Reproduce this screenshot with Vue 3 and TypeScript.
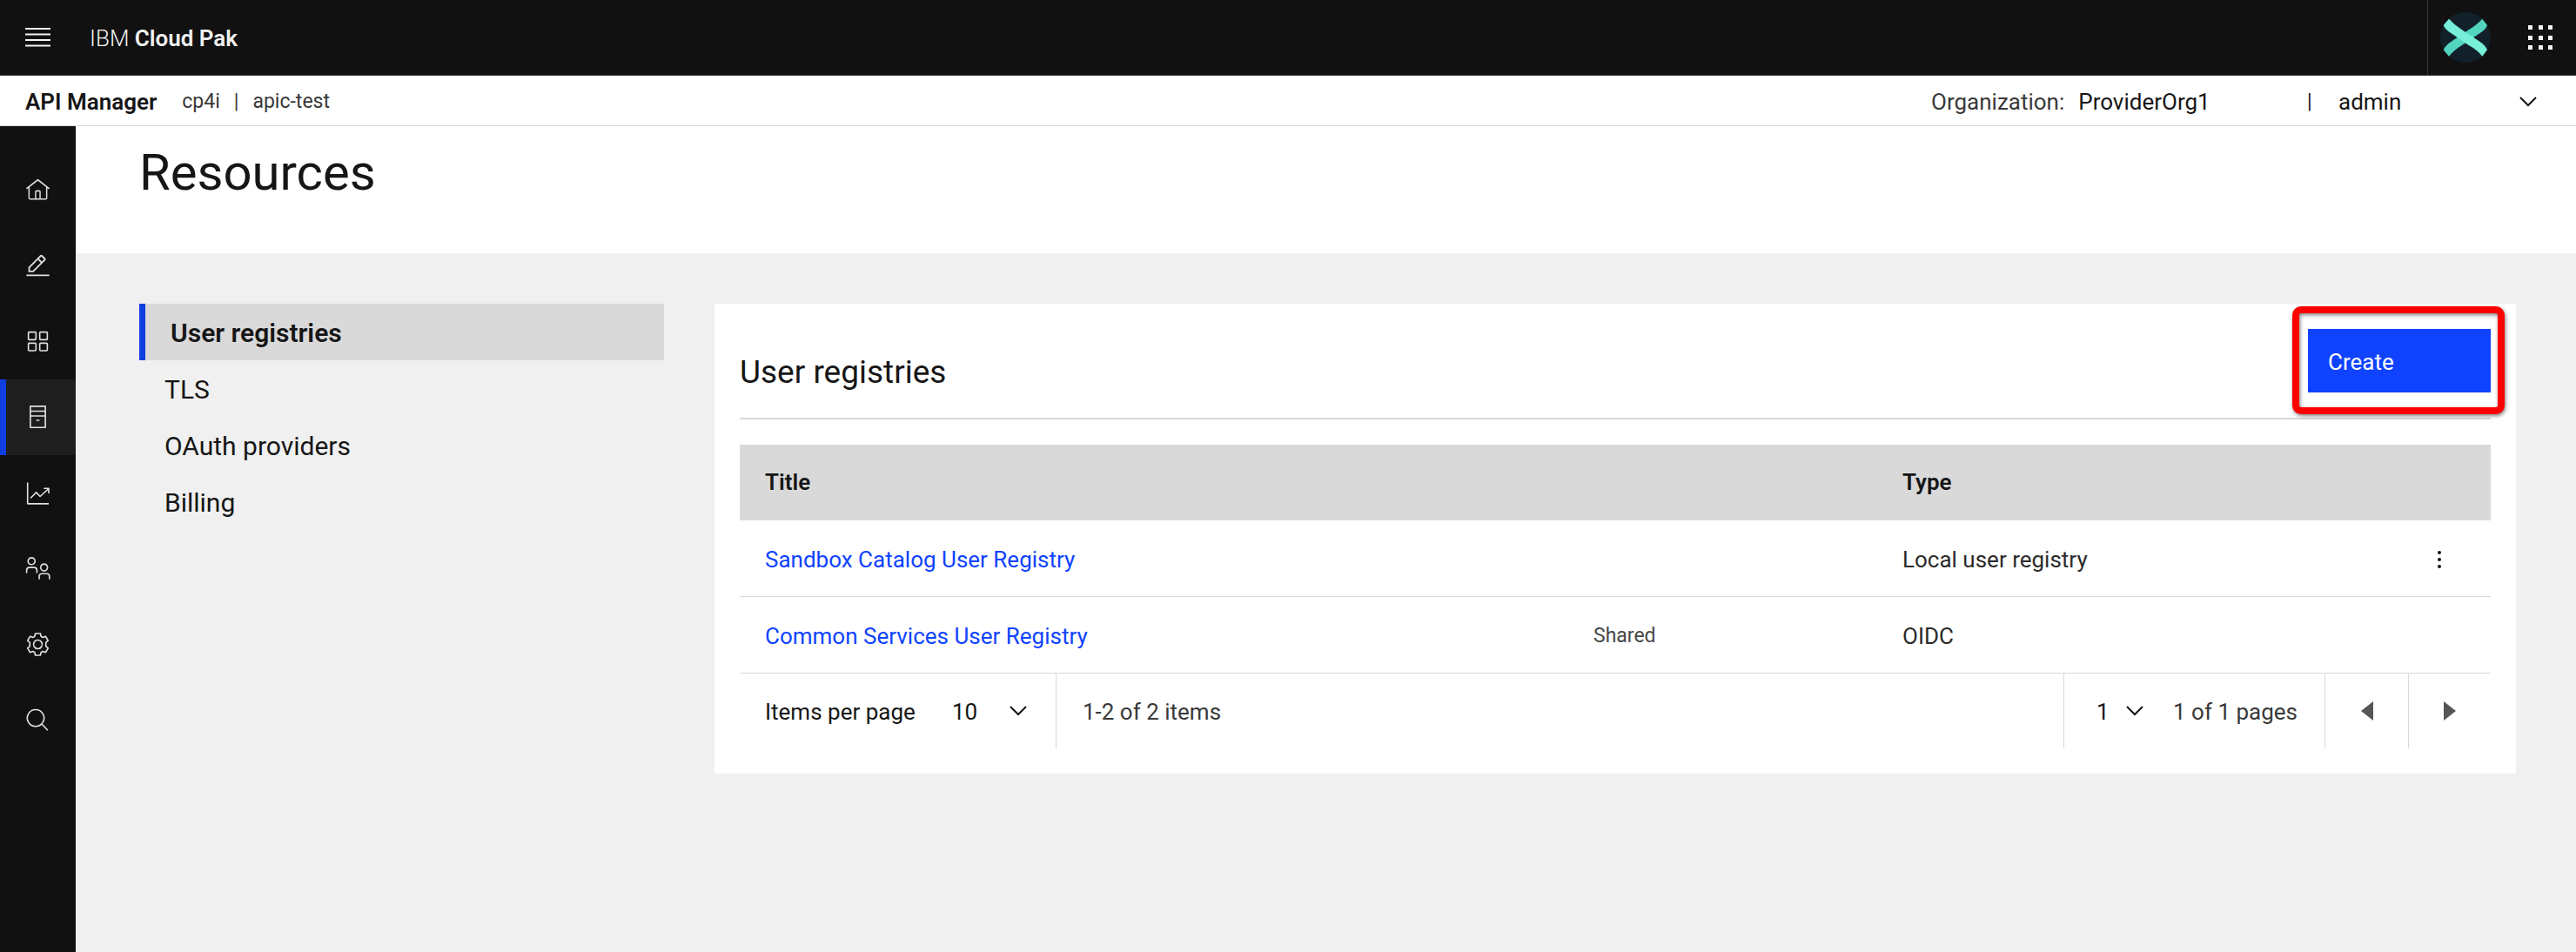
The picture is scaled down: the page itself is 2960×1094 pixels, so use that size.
<script setup lang="ts">
import { ref } from 'vue'

interface Registry {
  title: string
  scope: string
  type: string
  actions: boolean
}

interface RailItem {
  label: string
  active?: boolean
  fill?: string
  stroke?: string
}

const rail: RailItem[] = [
  {
    label: 'Home',
    fill: 'M16.6 2.2a1 1 0 0 0-1.24 0L1 13.42l1.24 1.57L4 13.62V26a2 2 0 0 0 2 2h20a2 2 0 0 0 2-2V13.63L29.76 15 31 13.43ZM18 26.4h-4V18h4Zm1.6 0V18a2 2 0 0 0-2-2h-3.2a2 2 0 0 0-2 2v8.4H5.6V12.06l10.4-8 10.4 8V26.4Z',
  },
  {
    label: 'Develop',
    fill: 'M1.5 27h29v2H1.5z M25.4 9c.8-.8.8-2 0-2.8l-3.6-3.6c-.8-.8-2-.8-2.8 0l-15 15V24h6.4l15-15zm-5-5L24 7.6l-3 3L17.4 7l3-3zM6 22v-3.6l10-10 3.6 3.6-10 10H6z',
  },
  {
    label: 'Manage',
    stroke: 'M5 4h7.600a1 1 0 0 1 1 1v7.600a1 1 0 0 1-1 1H5a1 1 0 0 1-1-1V5a1 1 0 0 1 1-1zM19.400 4H27a1 1 0 0 1 1 1v7.600a1 1 0 0 1-1 1h-7.600a1 1 0 0 1-1-1V5a1 1 0 0 1 1-1zM5 18h7.600a1 1 0 0 1 1 1v7.600a1 1 0 0 1-1 1H5a1 1 0 0 1-1-1V19a1 1 0 0 1 1-1zM19.400 18H27a1 1 0 0 1 1 1v7.600a1 1 0 0 1-1 1h-7.600a1 1 0 0 1-1-1V19a1 1 0 0 1 1-1z',
  },
  {
    label: 'Resources',
    active: true,
    stroke: 'M6.5 2h19v27h-19zM6.5 8.300h19M6.500 14.300h19M14 19.800h4',
  },
  {
    label: 'Analytics',
    stroke: 'M3 2.800v26.800h26.800M6.600 22.600L14 15.300l4.800 5.100 11-9.900M23.500 10.200h6.300v6.300',
  },
  {
    label: 'Members',
    stroke: 'M8 2a4.400 4.400 0 1 0 .01 0zM1.800 21.500v-3.500a3.500 3.500 0 0 1 3.500-3.500h6a3.500 3.500 0 0 1 3.500 3.500v3.500M23.900 10.100a4.400 4.400 0 1 0 .01 0zM17.700 29.600v-3.800a3.500 3.500 0 0 1 3.500-3.500h6a3.500 3.500 0 0 1 3.500 3.500v3.800',
  },
  {
    label: 'Settings',
    stroke: 'M12.800 2.200h6.400L20 5.800l2.300 1.300 3.500-1.300L29 11.200l-2.800 2.400v4.800l2.800 2.400-3.200 5.400-3.500-1.300L20 26.200l-.8 3.600h-6.400l-.8-3.600-2.300-1.300-3.500 1.300L3 20.800l2.800-2.400v-4.800L3 11.200l3.200-5.400 3.500 1.300L12 5.800zM16 10.500a5.500 5.500 0 1 0 .01 0z',
  },
  {
    label: 'Search',
    stroke: 'M13.200 2.800a10.600 10.600 0 1 0 .01 0zM20.900 21l7.800 8',
  },
]

const sections = ['User registries', 'TLS', 'OAuth providers', 'Billing']
const section = ref('User registries')

const registries: Registry[] = [
  { title: 'Sandbox Catalog User Registry', scope: '', type: 'Local user registry', actions: true },
  { title: 'Common Services User Registry', scope: 'Shared', type: 'OIDC', actions: false },
]

const pageSize = ref('10')
const page = ref('1')
</script>

<template>
  <div class="shell">
    <header class="topbar">
      <button class="icon-button menu" aria-label="Open menu">
        <svg viewBox="0 0 29 29" width="29" height="29"><path d="M0 4h29M0 10.500h29M0 17h29M0 23.500h29" stroke="#f4f4f4" stroke-width="2" /></svg>
      </button>
      <a class="brand" href="#">IBM <b>Cloud Pak</b></a>
      <div class="topbar-actions">
        <button class="icon-button" aria-label="Cloud Pak">
          <svg viewBox="132 42 174 174" width="58" height="58">
            <circle cx="219" cy="129" r="87" fill="#12202a" />
            <path d="M277 65L294 87Q288 103 268 115L207 156Q180 172 162 194L143 172Q150 156 170 143L230 103Q260 84 277 65Z" fill="#51d5bf" />
            <path d="M162 65L143 87Q150 103 170 115L230 156Q260 172 277 194L294 172Q288 156 268 143L207 103Q180 85 162 65Z" fill="#77efd9" />
          </svg>
        </button>
        <button class="icon-button switcher" aria-label="App switcher">
          <svg viewBox="0 0 28 28" width="28" height="28" fill="#f4f4f4">
            <template v-for="y in [0, 12, 23]" :key="y">
              <rect v-for="x in [0, 12, 23]" :key="x" :x="x" :y="y" width="5" height="5" />
            </template>
          </svg>
        </button>
      </div>
    </header>

    <div class="subbar">
      <strong class="product">API Manager</strong>
      <span class="instance"><span>cp4i</span><span>|</span><span>apic-test</span></span>
      <div class="org"><span class="muted">Organization:</span><span>ProviderOrg1</span></div>
      <span class="pipe">|</span>
      <button class="user">
        admin
        <svg class="chevron" viewBox="0 0 20 12" width="20" height="12"><path d="M1 1l9 9 9-9" /></svg>
      </button>
    </div>

    <div class="body">
      <nav class="rail" aria-label="Main">
        <a v-for="item in rail" :key="item.label" href="#" class="rail-item" :class="{ active: item.active }" :aria-label="item.label">
          <svg viewBox="0 0 32 32" width="29" height="29">
            <path v-if="item.fill" :d="item.fill" fill="#e0e0e0" />
            <path v-else :d="item.stroke" fill="none" stroke="#e0e0e0" stroke-width="1.800" stroke-linejoin="round" />
          </svg>
        </a>
      </nav>

      <main class="main">
        <div class="page-title"><h1>Resources</h1></div>
        <div class="content">
          <nav class="sections" aria-label="Resources">
            <a v-for="name in sections" :key="name" href="#" :class="{ active: name === section }" @click.prevent="section = name">{{ name }}</a>
          </nav>

          <section class="panel">
            <div class="panel-head">
              <h2>User registries</h2>
              <div class="create-wrap"><button class="create">Create</button></div>
            </div>

            <table>
              <colgroup><col /><col class="c-scope" /><col class="c-type" /><col class="c-menu" /></colgroup>
              <thead>
                <tr><th colspan="2">Title</th><th colspan="2">Type</th></tr>
              </thead>
              <tbody>
                <tr v-for="row in registries" :key="row.title">
                  <td><a href="#">{{ row.title }}</a></td>
                  <td class="scope">{{ row.scope }}</td>
                  <td>{{ row.type }}</td>
                  <td class="menu-cell">
                    <button v-if="row.actions" class="icon-button" aria-label="Options">
                      <svg viewBox="0 0 4 20" width="4" height="20" fill="#111"><circle cx="2" cy="2" r="2" /><circle cx="2" cy="10" r="2" /><circle cx="2" cy="18" r="2" /></svg>
                    </button>
                  </td>
                </tr>
              </tbody>
            </table>

            <div class="pagination">
              <div class="cell size">
                <label for="page-size">Items per page</label>
                <span class="select wide">
                  <select id="page-size" v-model="pageSize"><option>10</option><option>20</option></select>
                  <svg class="chevron" viewBox="0 0 20 12" width="20" height="12"><path d="M1 1l9 9 9-9" /></svg>
                </span>
              </div>
              <span class="range">1-2 of 2 items</span>
              <div class="cell pages">
                <span class="select">
                  <select id="page-number" v-model="page" aria-label="Page number"><option>1</option></select>
                  <svg class="chevron" viewBox="0 0 20 12" width="20" height="12"><path d="M1 1l9 9 9-9" /></svg>
                </span>
                <label class="muted" for="page-number">1 of 1 pages</label>
              </div>
              <button class="step" aria-label="Previous page"><svg viewBox="0 0 14 22" width="14" height="22"><path d="M14 0v22L0 11z" fill="#565656" /></svg></button>
              <button class="step" aria-label="Next page"><svg viewBox="0 0 14 22" width="14" height="22"><path d="M0 0v22l14-11z" fill="#565656" /></svg></button>
            </div>
          </section>
        </div>
      </main>
    </div>
  </div>
</template>

<style>
body {
  background: #f0f0f0;
}
</style>

<style scoped>
.shell,
.shell * {
  box-sizing: border-box;
}
.shell {
  display: flex;
  flex-direction: column;
  min-height: 100vh;
  font-family: Roboto, 'Liberation Sans', sans-serif;
  font-size: 26px;
  line-height: 32px;
  color: #161616;
}
a {
  color: inherit;
  text-decoration: none;
}
button,
select {
  font: inherit;
  color: inherit;
  border: 0;
  border-radius: 0;
  background: none;
  padding: 0;
  margin: 0;
}
h1,
h2 {
  margin: 0;
  font-weight: 400;
}
svg {
  display: block;
}
.chevron path {
  fill: none;
  stroke: #161616;
  stroke-width: 2;
}
.muted {
  color: #393939;
}
.icon-button {
  display: flex;
  align-items: center;
  justify-content: center;
}
.topbar {
  display: flex;
  align-items: center;
  height: 87px;
  background: #111;
  border-bottom: 1px solid #333;
  color: #f0f0f0;
}
.menu {
  width: 87px;
  height: 86px;
}
.brand {
  margin-left: 16px;
  padding-top: 2px;
  font-weight: 300;
}
.brand b,
.product {
  font-weight: 600;
}
.topbar-actions {
  display: flex;
  margin-left: auto;
  height: 86px;
  border-left: 1px solid #333;
}
.topbar-actions .icon-button {
  width: 86px;
}
.topbar-actions .switcher {
  width: 84px;
  padding-left: 2px;
}
.subbar {
  display: flex;
  align-items: center;
  height: 58px;
  padding: 2px 45px 0 29px;
  background: #fff;
  border-bottom: 1px solid #d9d9d9;
}
.instance {
  display: flex;
  gap: 16px;
  margin-left: 29px;
  font-size: 23px;
  color: #393939;
}
.org {
  display: flex;
  gap: 16px;
  width: 432px;
  margin-left: auto;
}
.pipe {
  width: 36px;
  font-size: 23px;
}
.user {
  display: flex;
  align-items: center;
  justify-content: space-between;
  width: 228px;
}
.body {
  display: flex;
  flex: 1;
}
.rail {
  flex: none;
  width: 87px;
  padding-top: 30px;
  background: #111;
}
.rail-item {
  display: flex;
  align-items: center;
  justify-content: center;
  height: 87px;
  border-left: 7px solid transparent;
  padding-right: 7px;
}
.rail-item.active {
  background: #1e1e1e;
  border-left-color: #0f3fe0;
}
.main {
  flex: 1;
  min-width: 0;
  background: #f0f0f0;
}
.page-title {
  height: 146px;
  padding: 17px 73px 0;
  background: #fff;
}
.page-title h1 {
  font-size: 58px;
  line-height: 72px;
}
.content {
  display: grid;
  grid-template-columns: 603fr 2070fr;
  gap: 58px;
  align-items: start;
  padding: 58px 69px 58px 73px;
}
.sections {
  display: flex;
  flex-direction: column;
  font-size: 30px;
}
.sections a {
  padding: 2px 0 0 29px;
  line-height: 63px;
}
.sections .active {
  border-left: 7px solid #0f3fe0;
  background: #d9d9d9;
  font-weight: 600;
}
.panel {
  padding: 29px;
  background: #fff;
}
.panel-head {
  display: flex;
  align-items: flex-start;
  justify-content: space-between;
  height: 104px;
  margin-bottom: 29px;
  border-bottom: 2px solid #d9d9d9;
}
.panel-head h2 {
  padding-top: 28px;
  font-size: 37px;
  line-height: 44px;
}
.create-wrap {
  position: relative;
}
.create-wrap::after {
  content: '';
  position: absolute;
  inset: -26px -16px -25px -18px;
  border: 8px solid #f00;
  border-radius: 10px;
  filter: drop-shadow(1px 2px 2px rgba(0, 0, 0, 0.5));
  pointer-events: none;
}
.create {
  display: block;
  width: 210px;
  height: 73px;
  padding: 2px 0 0 23px;
  background: #0f43ff;
  color: #fff;
  text-align: left;
}
table {
  width: 100%;
  table-layout: fixed;
  border-collapse: separate;
  border-spacing: 0;
}
.c-scope {
  width: 355px;
}
.c-type {
  width: 587px;
}
.c-menu {
  width: 118px;
}
th,
td {
  height: 88px;
  padding: 2px 0 0 29px;
  text-align: left;
  border-bottom: 1px solid #d9d9d9;
}
th {
  height: 87px;
  padding-top: 0;
  background: #d9d9d9;
  font-weight: 600;
}
td {
  color: #2b2b2b;
}
td a {
  color: #0f43ff;
}
.scope {
  font-size: 23px;
  color: #474747;
}
.menu-cell {
  padding: 2px 0 0;
}
.menu-cell .icon-button {
  width: 100%;
  height: 80px;
}
.pagination {
  display: flex;
  align-items: stretch;
  height: 86px;
  line-height: 84px;
}
.pagination label,
.range,
.select select {
  padding-top: 2px;
}
.cell {
  display: flex;
  align-items: center;
  border-right: 1px solid #d9d9d9;
}
.size {
  justify-content: space-between;
  width: 364px;
  padding: 0 33px 0 29px;
}
.range {
  padding-left: 30px;
  color: #393939;
}
.select {
  display: grid;
  align-items: center;
  width: 54px;
}
.select.wide {
  width: 86px;
}
.select > * {
  grid-area: 1 / 1;
}
.select select {
  width: 100%;
  height: 86px;
  appearance: none;
}
.select .chevron {
  justify-self: end;
  pointer-events: none;
}
.pages {
  justify-content: space-between;
  width: 301px;
  margin-left: auto;
  padding: 0 31px 0 37px;
  border-left: 1px solid #d9d9d9;
}
.step {
  display: flex;
  align-items: center;
  justify-content: center;
  width: 96px;
  border-right: 1px solid #d9d9d9;
}
.step:last-child {
  width: 94px;
  border-right: 0;
}
</style>
